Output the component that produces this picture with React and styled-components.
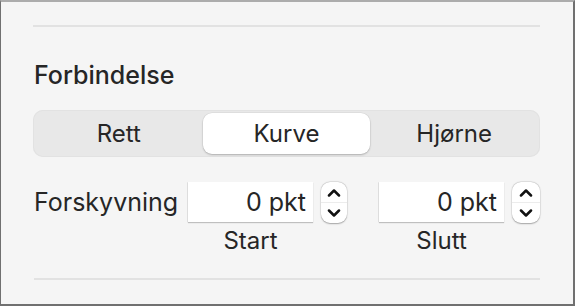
import React, { useState } from 'react';
import styled, { createGlobalStyle } from 'styled-components';

const Global = createGlobalStyle`
  html, body {
    margin: 0;
    padding: 0;
    background: #f5f5f5;
  }
  * { box-sizing: border-box; }
`

const Panel = styled.div`
  width: 575px;
  height: 306px;
  background: #f5f5f5;
  border-top: 2px solid #acacac;
  border-left: 1px solid #707070;
  border-right: 2px solid #707070;
  border-bottom: 2px solid #707070;
  padding: 23px 33px 0 32px;
  font-family: Inter, "Liberation Sans", sans-serif;
  color: #262626;
`

const Rule = styled.div`
  height: 2px;
  background: #e2e2e2;
  margin-left: ${p => p.$inset || 0}px;
  margin-top: ${p => p.$top || 0}px;
`

const Title = styled.div`
  margin-top: 33px;
  font-size: 25px;
  line-height: 30px;
  font-weight: 500;
  padding-left: 1px;
`

const Segmented = styled.div`
  margin-top: 20px;
  height: 47px;
  background: #e8e8e8;
  border-radius: 10px;
  box-shadow: inset 0 0 0 1px #e2e2e2;
  padding: 3px 2px;
  display: grid;
  grid-template-columns: repeat(3, 1fr);
`

const Segment = styled.button`
  border: none;
  font: inherit;
  font-size: 24px;
  color: #262626;
  background: ${p => (p.$active ? '#ffffff' : 'transparent')};
  border-radius: 9px;
  box-shadow: ${p => (p.$active ? '0 1px 2px rgba(0,0,0,0.22), 0 0 0 0.5px rgba(0,0,0,0.06)' : 'none')};
  padding: 0;
  cursor: pointer;
`

const Row = styled.div`
  margin-top: 25px;
  display: flex;
  align-items: flex-start;
  padding-left: 1px;
`

const Label = styled.div`
  width: 155px;
  height: 40px;
  display: flex;
  align-items: center;
  font-size: 25px;
`

const Field = styled.div`
  display: flex;
  align-items: flex-start;
  gap: 8px;
  margin-left: ${p => p.$gap || 0}px;
`

const InputCol = styled.div`
  display: flex;
  flex-direction: column;
  align-items: center;
`

const Input = styled.div`
  width: 125px;
  height: 40px;
  background: #fff;
  box-shadow: 0 1px 1px rgba(0,0,0,0.22), -0.5px 0 0 rgba(0,0,0,0.12);
  text-align: right;
  padding-right: 7px;
  font-size: 25px;
  line-height: 40px;
`

const Caption = styled.div`
  margin-top: 4px;
  font-size: 24px;
  line-height: 29px;
`

const Stepper = styled.div`
  width: ${p => p.$w || 26}px;
  height: 41px;
  background: #fff;
  border-radius: 9px;
  box-shadow: 0 0.5px 1.5px rgba(0,0,0,0.3), 0 0 0 0.5px rgba(0,0,0,0.08);
  display: flex;
  flex-direction: column;
`

const Half = styled.div`
  flex: 1;
  display: flex;
  align-items: center;
  justify-content: center;
  border-top: ${p => (p.$lower ? '1px solid #ececec' : 'none')};
`

const Chevron = ({ up }) => (
  <svg width="14" height="9" viewBox="0 0 14 9">
    <path
      d={up ? 'M2 7.5 L7 2.5 L12 7.5' : 'M2 1.5 L7 6.5 L12 1.5'}
      fill="none"
      stroke="#111"
      strokeWidth="2.5"
      strokeLinecap="round"
      strokeLinejoin="round"
    />
  </svg>
)

const Spin = ({ w }) => (
  <Stepper $w={w}>
    <Half><Chevron up /></Half>
    <Half $lower><Chevron /></Half>
  </Stepper>
)

const App = () => {
  const [mode, setMode] = useState('Kurve');

  return (
    <Panel>
      <Global />
      <Rule />
      <Title>Forbindelse</Title>
      <Segmented>
        {['Rett', 'Kurve', 'Hjørne'].map(m => (
          <Segment key={m} $active={m === mode} onClick={() => setMode(m)}>{m}</Segment>
        ))}
      </Segmented>
      <Row>
        <Label>Forskyvning</Label>
        <Field>
          <InputCol>
            <Input>0 pkt</Input>
            <Caption>Start</Caption>
          </InputCol>
          <Spin w={26} />
        </Field>
        <Field $gap={32}>
          <InputCol>
            <Input>0 pkt</Input>
            <Caption>Slutt</Caption>
          </InputCol>
          <Spin w={28} />
        </Field>
      </Row>
      <Rule $inset={1} $top={23} />
    </Panel>
  )
}

export default App;
